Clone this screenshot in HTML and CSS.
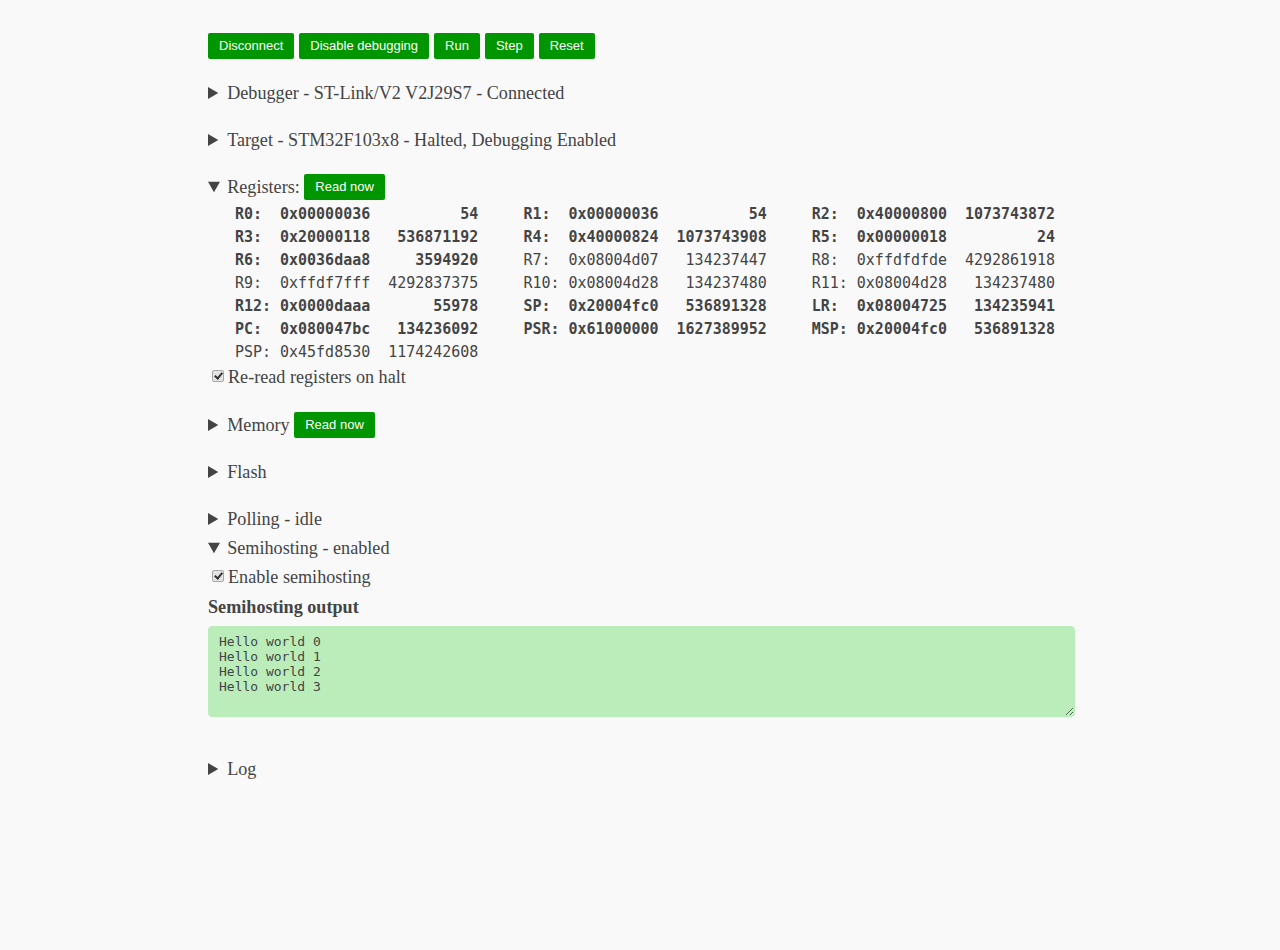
FILE: index.html
```
<!DOCTYPE html>
<html>
<head>
<meta charset="utf-8">
<link rel="stylesheet" href="styles.css">
</head>
<body>
<div class="page">
  <div class="toolbar">
    <button class="btn">Disconnect</button>
    <button class="btn">Disable debugging</button>
    <button class="btn">Run</button>
    <button class="btn">Step</button>
    <button class="btn">Reset</button>
  </div>

  <details class="sec"><summary>Debugger - ST-Link/V2 V2J29S7 - Connected</summary></details>
  <details class="sec"><summary>Target - STM32F103x8 - Halted, Debugging Enabled</summary></details>

  <details class="sec" open>
    <summary>Registers: <button class="btn">Read now</button></summary>
    <div class="regs">
      <div class="row"><span class="b">R0:  0x00000036          54</span>     <span class="b">R1:  0x00000036          54</span>     <span class="b">R2:  0x40000800  1073743872</span></div>
      <div class="row"><span class="b">R3:  0x20000118   536871192</span>     <span class="b">R4:  0x40000824  1073743908</span>     <span class="b">R5:  0x00000018          24</span></div>
      <div class="row"><span class="b">R6:  0x0036daa8     3594920</span>     <span>R7:  0x08004d07   134237447</span>     <span>R8:  0xffdfdfde  4292861918</span></div>
      <div class="row"><span>R9:  0xffdf7fff  4292837375</span>     <span>R10: 0x08004d28   134237480</span>     <span>R11: 0x08004d28   134237480</span></div>
      <div class="row"><span class="b">R12: 0x0000daaa       55978</span>     <span class="b">SP:  0x20004fc0   536891328</span>     <span class="b">LR:  0x08004725   134235941</span></div>
      <div class="row"><span class="b">PC:  0x080047bc   134236092</span>     <span class="b">PSR: 0x61000000  1627389952</span>     <span class="b">MSP: 0x20004fc0   536891328</span></div>
      <div class="row"><span>PSP: 0x45fd8530  1174242608</span></div>
    </div>
    <label class="check"><input type="checkbox" checked>Re-read registers on halt</label>
  </details>

  <details class="sec"><summary>Memory <button class="btn">Read now</button></summary></details>
  <details class="sec"><summary>Flash</summary></details>
  <details class="sec tight"><summary>Polling - idle</summary></details>

  <details class="sec semi" open>
    <summary>Semihosting - enabled</summary>
    <label class="check check-semi"><input type="checkbox" checked>Enable semihosting</label>
    <div class="out-title">Semihosting output</div>
    <textarea class="output" readonly>Hello world 0
Hello world 1
Hello world 2
Hello world 3</textarea>
  </details>

  <details class="sec"><summary>Log</summary></details>
</div>
</body>
</html>
```
FILE: styles.css
```
html, body {
  margin: 0;
  background: #f9f9f9;
}
body {
  padding: 33px 0 0 208px;
  font-family: "Liberation Serif", serif;
  font-size: 18.15px;
  color: #444;
}
.page {
  width: 867px;
}
.toolbar {
  display: flex;
  gap: 5px;
  margin-bottom: 20px;
}
.btn {
  height: 26px;
  padding: 0 11px;
  border: none;
  border-radius: 2px;
  background: #009600;
  color: #fff;
  font-family: "Liberation Sans", Arial, sans-serif;
  font-size: 13px;
  line-height: 26px;
  vertical-align: middle;
  cursor: pointer;
}
.sec {
  margin-bottom: 18px;
}
.sec.tight {
  margin-bottom: 0;
}
.sec.semi {
  margin-bottom: 0;
}
summary {
  height: 29px;
  line-height: 29px;
  cursor: pointer;
}
summary .btn {
  position: relative;
  top: -2px;
}
.regs {
  padding-top: 1px;
  padding-left: 27px;
  font-family: "DejaVu Sans Mono", monospace;
  font-size: 14.97px;
  line-height: 23px;
}
.row {
  white-space: pre;
  height: 23px;
}
.b {
  font-weight: bold;
}
.check {
  display: flex;
  align-items: center;
  box-sizing: border-box;
  height: 29px;
  padding: 0 0 3px 4px;
}
.check.check-semi {
  padding-bottom: 1px;
}
.check input {
  appearance: none;
  -webkit-appearance: none;
  width: 12px;
  height: 12px;
  margin: 0 4px 0 0;
  border: 1px solid #a8a8a8;
  border-radius: 2px;
  background: #e4e4e4;
  position: relative;
  top: -1px;
}
.check input:checked::after {
  content: "";
  position: absolute;
  left: 3px;
  top: 0px;
  width: 3px;
  height: 6px;
  border: solid #333;
  border-width: 0 2px 2px 0;
  transform: rotate(40deg);
}
.out-title {
  font-weight: bold;
  height: 31px;
  line-height: 31px;
  margin-bottom: 3px;
}
.output {
  display: block;
  box-sizing: border-box;
  width: 867px;
  height: 91px;
  margin: 0 0 38px 0;
  padding: 7px 10px;
  border: 1px solid #bbedba;
  border-radius: 4px;
  background: #bbedba;
  color: #444;
  font-family: "DejaVu Sans Mono", monospace;
  font-size: 13px;
  line-height: 15px;
  resize: vertical;
  outline: none;
}
```
